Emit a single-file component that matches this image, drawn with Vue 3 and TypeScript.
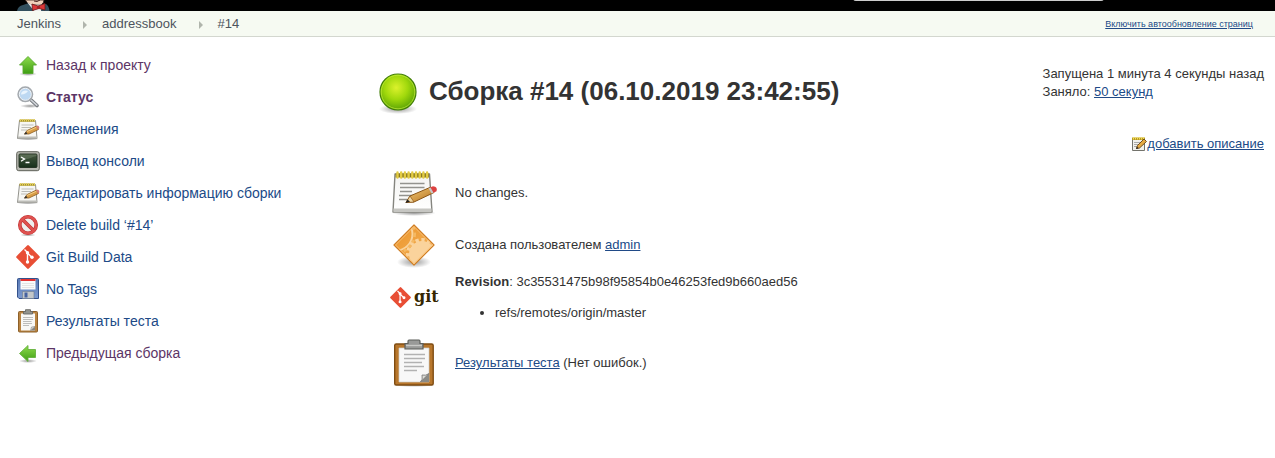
<script setup lang="ts">
interface Task {
  label: string
  icon: string
  visited?: boolean
  current?: boolean
}

const crumbs: string[] = ['Jenkins', 'addressbook', '#14']

const tasks: Task[] = [
  { label: 'Назад к проекту', icon: 'up', visited: true },
  { label: 'Статус', icon: 'search', visited: true, current: true },
  { label: 'Изменения', icon: 'notepad-md' },
  { label: 'Вывод консоли', icon: 'terminal' },
  { label: 'Редактировать информацию сборки', icon: 'notepad-md' },
  { label: 'Delete build ‘#14’', icon: 'forbidden' },
  { label: 'Git Build Data', icon: 'git' },
  { label: 'No Tags', icon: 'save' },
  { label: 'Результаты теста', icon: 'clipboard-md' },
  { label: 'Предыдущая сборка', icon: 'previous', visited: true },
]
</script>

<template>
  <svg class="sprite" width="0" height="0" aria-hidden="true">
    <defs>
      <radialGradient id="g-ball" cx="0.45" cy="0.38" r="0.65">
        <stop offset="0" stop-color="#dcf22c" />
        <stop offset="0.5" stop-color="#a0d80c" />
        <stop offset="1" stop-color="#559f04" />
      </radialGradient>
      <radialGradient id="g-shadow">
        <stop offset="0" stop-color="#000" stop-opacity="0.4" />
        <stop offset="1" stop-color="#000" stop-opacity="0" />
      </radialGradient>
      <linearGradient id="g-green" x1="0" y1="0" x2="0" y2="1">
        <stop offset="0" stop-color="#8edc4c" />
        <stop offset="1" stop-color="#3f9e14" />
      </linearGradient>
      <linearGradient id="g-paper" x1="0" y1="0" x2="0" y2="1">
        <stop offset="0" stop-color="#f4f4f2" />
        <stop offset="1" stop-color="#fff" />
      </linearGradient>
      <linearGradient id="g-pencil" x1="0" y1="0" x2="1" y2="1">
        <stop offset="0" stop-color="#f6cf7c" />
        <stop offset="1" stop-color="#b5701c" />
      </linearGradient>
      <linearGradient id="g-screen" x1="0" y1="0" x2="0" y2="1">
        <stop offset="0" stop-color="#45583f" />
        <stop offset="1" stop-color="#17301b" />
      </linearGradient>
      <linearGradient id="g-floppy" x1="0" y1="0" x2="0" y2="1">
        <stop offset="0" stop-color="#5878b4" />
        <stop offset="1" stop-color="#7d9bd0" />
      </linearGradient>
      <linearGradient id="g-orange" x1="0" y1="0" x2="1" y2="1">
        <stop offset="0" stop-color="#ec9428" />
        <stop offset="1" stop-color="#f3b460" />
      </linearGradient>
      <clipPath id="c-diamond"><path d="M24 5 43 24 24 43 5 24Z" /></clipPath>
    </defs>

    <symbol id="i-up" viewBox="0 0 24 24">
      <ellipse cx="12" cy="21" rx="9" ry="2" fill="url(#g-shadow)" />
      <path d="M12 3.500 20.500 12H17V20.500H7V12H3.500Z" fill="url(#g-green)" stroke="#57a82e" stroke-width="0.900" stroke-linejoin="round" />
    </symbol>
    <symbol id="i-previous" viewBox="0 0 24 24">
      <ellipse cx="12" cy="20" rx="9" ry="2" fill="url(#g-shadow)" />
      <path d="M3.500 12.500 12 4.500V8.500H19.500V16.500H12V20.500Z" fill="url(#g-green)" stroke="#67b13f" stroke-width="0.900" stroke-linejoin="round" />
    </symbol>
    <symbol id="i-search" viewBox="0 0 24 24">
      <ellipse cx="14" cy="21" rx="10" ry="2" fill="url(#g-shadow)" />
      <path d="M14.500 14.500 21 20.500" stroke="#777b80" stroke-width="3.600" stroke-linecap="round" />
      <path d="M15 15 20.800 20.200" stroke="#d0d4d8" stroke-width="1.600" stroke-linecap="round" />
      <circle cx="9.300" cy="9.300" r="7" fill="#bdd8f2" stroke="#a4a9ae" stroke-width="2" />
      <circle cx="9.300" cy="9.300" r="6" fill="none" stroke="#eef3f8" />
      <path d="M5 9.500C5 6 9 4.500 12 6 10.500 8.500 8.500 9.200 5 9.500Z" fill="#eaf4fd" />
    </symbol>
    <symbol id="i-notepad" viewBox="0 0 48 48">
      <ellipse cx="24" cy="44" rx="22" ry="3" fill="url(#g-shadow)" />
      <path d="M5 5H39.500L42 43H3Z" fill="url(#g-paper)" stroke="#85857f" stroke-width="1.400" stroke-linejoin="round" />
      <path d="M3.500 39.500H41.500V43H3.500Z" fill="#c6c6c2" />
      <path d="M5.500 4.500H39V8.500H5.500Z" fill="#8b7a20" />
      <path d="M7.500 3.500V8.500M11.200 3.500V8.500M14.900 3.500V8.500M18.600 3.500V8.500M22.300 3.500V8.500M26 3.500V8.500M29.700 3.500V8.500M33.400 3.500V8.500M37.100 3.500V8.500" stroke="#e3cc43" stroke-width="2.400" stroke-linecap="round" />
      <path d="M10 14.500H34.500M10 18.500H34.500M10 22.500H22M9 26.500H28M9 30.500H18" stroke="#92928e" stroke-width="1.300" />
      <path d="M16 33.500 20 27 41 18 44 23.500 24 33Z" fill="url(#g-pencil)" stroke="#8b5515" stroke-width="1" stroke-linejoin="round" />
      <path d="M16 33.500 20 27 24 33Z" fill="#f0d7a4" stroke="#8b5515" stroke-width="0.700" />
      <path d="M15.500 34 17.500 30.500 20 32.800Z" fill="#222" />
      <path d="M40 18.500 43 17.200Q48 17.500 46.500 22.300L43 24Z" fill="#dc4141" />
      <path d="M38.500 19.200 40.500 18.400 43.500 23.700 41.500 24.600Z" fill="#c8c8c8" />
    </symbol>
    <symbol id="i-notepad-md" viewBox="0 0 24 24">
      <ellipse cx="12" cy="22" rx="11" ry="1.500" fill="url(#g-shadow)" />
      <path d="M3.500 3.500H19.500L21 21.500H1.500Z" fill="#f7f7f4" stroke="#93938d" stroke-linejoin="round" />
      <path d="M2 19.500H21V21.500H2Z" fill="#bdbdb8" />
      <path d="M3.500 2.500H19V4.800H3.500Z" fill="#a8952f" />
      <path d="M4.500 2V4.500M6.500 2V4.500M8.500 2V4.500M10.500 2V4.500M12.500 2V4.500M14.500 2V4.500M16.500 2V4.500M18.500 2V4.500" stroke="#e5d05a" />
      <path d="M5.500 8H17.500M5.500 10.500H15M5 13H11" stroke="#b5b5b1" stroke-width="0.900" />
      <path d="M8.500 17 11 13.500 20.500 9 22.500 12.500 13 17Z" fill="#d99d46" stroke="#8b5c20" stroke-width="0.800" stroke-linejoin="round" />
      <path d="M11 14.500 20.500 10.200" stroke="#f4cf86" />
      <path d="M8 17.500 10 14.800 11.500 16.800Z" fill="#333" />
      <path d="M20 9.200 21.500 8.500Q24 9 23 12L22 12.600Z" fill="#d5807a" />
    </symbol>
    <symbol id="i-notepad-sm" viewBox="0 0 16 16">
      <path d="M1.500 2.500H13.500V14.500H1.500Z" fill="#f1f1ed" stroke="#73736c" />
      <path d="M1 1.500H14V4H1Z" fill="#b79a20" />
      <path d="M2.500 1V3.500M4.500 1V3.500M6.500 1V3.500M8.500 1V3.500M10.500 1V3.500M12.500 1V3.500" stroke="#f2dc61" />
      <path d="M3 6.500H10M3 8.500H8M3 10.500H6" stroke="#aaa" />
      <path d="M5.500 12.500 6.500 9.500 13 3 15.500 5.500 8.500 12Z" fill="#e6ab44" stroke="#654114" stroke-width="0.900" stroke-linejoin="round" />
      <path d="M5 13 6 10.800 7.500 12.300Z" fill="#222" />
    </symbol>
    <symbol id="i-terminal" viewBox="0 0 24 24">
      <rect x="0.700" y="2.700" width="22.600" height="19" rx="2" fill="#b9bab2" stroke="#5e6058" />
      <rect x="3" y="5" width="18" height="13.500" rx="1" fill="url(#g-screen)" stroke="#273526" />
      <path d="M3.500 9C10 13 15 8 20.500 7V5.500H3.500Z" fill="#8a9a82" opacity="0.350" />
      <path d="M5 8 8.500 10 5 12.200M9.500 13.500H13.500" fill="none" stroke="#fff" stroke-width="1.300" />
    </symbol>
    <symbol id="i-forbidden" viewBox="0 0 24 24">
      <ellipse cx="12" cy="22" rx="8" ry="1.500" fill="url(#g-shadow)" />
      <circle cx="12" cy="12" r="8.200" fill="#eee" stroke="#c03030" stroke-width="3.600" />
      <path d="M6.500 6.500 17.500 17.500" stroke="#c03030" stroke-width="3.600" />
      <circle cx="12" cy="12" r="8.200" fill="none" stroke="#df5250" stroke-width="2.400" />
      <path d="M6.500 6.500 17.500 17.500" stroke="#df5250" stroke-width="2.400" />
    </symbol>
    <symbol id="i-git" viewBox="0 0 24 24">
      <rect x="3.300" y="3.300" width="17.400" height="17.400" rx="1.200" fill="#e84e35" transform="rotate(45 12 12)" />
      <path d="M8.500 4.500 11.500 7.500V17M11.500 8 16 12.500" fill="none" stroke="#fff" stroke-width="1.400" />
      <circle cx="11.500" cy="7.800" r="1.700" fill="#fff" />
      <circle cx="11.500" cy="17" r="1.700" fill="#fff" />
      <circle cx="16" cy="12.300" r="1.700" fill="#fff" />
    </symbol>
    <symbol id="i-save" viewBox="0 0 24 24">
      <path d="M2.500 1.500H21.500Q22.500 1.500 22.500 2.500V21.500H3L1.500 20V2.500Q1.500 1.500 2.500 1.500Z" fill="url(#g-floppy)" stroke="#34528c" />
      <path d="M4.500 2H19.500V12.500H4.500Z" fill="#fafafa" />
      <path d="M4.500 2H19.500V4H4.500Z" fill="#e33131" />
      <path d="M6 6.500H18M6 8.500H18M6 10.500H18" stroke="#dedede" stroke-width="0.800" />
      <path d="M6.500 14.500H18V21.500H6.500Z" fill="#c3c7c9" stroke="#6c7c92" stroke-width="0.600" />
      <path d="M8.500 15.500H11.500V20.500H8.500Z" fill="#4562a0" />
    </symbol>
    <symbol id="i-clipboard" viewBox="0 0 48 48">
      <ellipse cx="24" cy="46" rx="22" ry="2" fill="url(#g-shadow)" />
      <rect x="4.700" y="5" width="38.500" height="41" rx="1.500" fill="#b8772c" stroke="#7f4c12" stroke-width="1.400" />
      <path d="M9 9H39V43H9Z" fill="#f8f8f8" stroke="#cfcfca" stroke-width="0.700" />
      <path d="M14 15.500H35M14 19.500H35M14 23.500H32M14 27.500H34M14 31.500H27" stroke="#b2b2b2" stroke-width="1.500" />
      <path d="M39 34.500V43H30.500Q33 41 32 36Q36 37 39 34.500Z" fill="#8b8b87" />
      <path d="M30.500 43Q33 41 32 36Q36 37 39 34.500Z" fill="#deded9" stroke="#777" stroke-width="0.800" />
      <path d="M15 4.500H18V2.500Q18 1 19 1H29Q30 1 30 2.500V4.500H33V10H15Z" fill="#999a98" stroke="#5d5f5b" stroke-width="1.200" />
      <path d="M16 6.500H32" stroke="#c8c9c6" stroke-width="1.300" />
    </symbol>
    <symbol id="i-clipboard-md" viewBox="0 0 24 24">
      <rect x="2.500" y="2.500" width="19" height="20.500" rx="1" fill="#b98442" stroke="#8d6029" />
      <path d="M5 4.500H19V21.500H5Z" fill="#f8f8f6" />
      <path d="M7 8.500H17M7 10.500H17M7 12.500H15.500M7 14.500H16M7 16.500H13" stroke="#bdbdbb" />
      <path d="M19 17.500V21.500H14.500Z" fill="#858581" />
      <path d="M14.500 21.500 15.500 18 19 17.500Z" fill="#dcdcd8" stroke="#888" stroke-width="0.600" />
      <path d="M7.500 2.500H9.500V0.700H14.500V2.500H16.500V5H7.500Z" fill="#92948f" stroke="#666864" stroke-width="0.900" />
    </symbol>
    <symbol id="i-ball" viewBox="0 0 48 48">
      <ellipse cx="24" cy="41" rx="19" ry="5" fill="url(#g-shadow)" />
      <circle cx="24" cy="24" r="18" fill="url(#g-ball)" stroke="#437f08" stroke-width="1.200" />
      <circle cx="24" cy="24" r="16.800" fill="none" stroke="#c8ee3f" stroke-width="0.900" opacity="0.750" />
    </symbol>
    <symbol id="i-user-cause" viewBox="0 0 48 48">
      <ellipse cx="24" cy="41" rx="17" ry="6" fill="url(#g-shadow)" />
      <path d="M24 4 44 24 24 44 4 24Z" fill="url(#g-orange)" stroke="#cf7d24" stroke-width="1.200" stroke-linejoin="round" />
      <g clip-path="url(#c-diamond)">
        <circle cx="32" cy="33" r="13" fill="#fad39c" />
        <circle cx="32" cy="33" r="14" fill="none" stroke="#fad39c" stroke-width="4" stroke-dasharray="3.300 2.600" />
        <circle cx="6" cy="13" r="16.500" fill="none" stroke="#fad39c" stroke-width="2" />
        <circle cx="6" cy="13" r="18.500" fill="none" stroke="#f4b863" stroke-width="3" stroke-dasharray="3 3" />
      </g>
      <path d="M24 5.500 42.500 24 24 42.500 5.500 24Z" fill="none" stroke="#f8c27c" stroke-width="0.900" />
    </symbol>
  </svg>

  <header class="top-bar">
    <svg class="mascot" viewBox="0 0 33 11" aria-hidden="true">
      <path d="M0 11Q1 6 6 5L12 3 29 4Q32 6 32.500 11Z" fill="#33505e" />
      <path d="M8 0H27Q27 3 24 5H14Q10 3 8 0Z" fill="#f0d2bb" stroke="#301f1b" stroke-width="0.800" />
      <path d="M10 2 15 5 25 4.500 24 11H17Z" fill="#eee" />
      <path d="M17 1Q20 2.500 23 0" fill="none" stroke="#4b2521" />
      <path d="M15 4 21 6 28 3.500V10L22 8.500 15.500 10.500Z" fill="#dc3838" stroke="#691919" stroke-width="0.800" />
      <circle cx="21.500" cy="7.300" r="1.600" fill="#a31f22" />
    </svg>
    <input class="search" type="search" aria-label="Поиск">
  </header>

  <nav class="breadcrumbs" aria-label="Навигация">
    <ul class="crumbs">
      <li v-for="crumb in crumbs" :key="crumb"><a href="#">{{ crumb }}</a></li>
    </ul>
    <a class="refresh" href="#">Включить автообновление страниц</a>
  </nav>

  <div class="page">
    <aside class="side">
      <a
        v-for="task in tasks"
        :key="task.label"
        href="#"
        class="task"
        :class="{ visited: task.visited, current: task.current }"
      >
        <svg class="icon-md" aria-hidden="true"><use :href="`#i-${task.icon}`" /></svg>
        <span>{{ task.label }}</span>
      </a>
    </aside>

    <main class="main">
      <div class="heading">
        <h1>
          <svg class="icon-xl" aria-hidden="true"><use href="#i-ball" /></svg>
          <span>Сборка #14 (06.10.2019 23:42:55)</span>
        </h1>
        <div class="info">
          <div class="timing">
            <div>Запущена 1 минута 4 секунды назад</div>
            <div>Заняло: <a href="#">50 секунд</a></div>
          </div>
          <a class="describe" href="#"><svg class="icon-sm" aria-hidden="true"><use href="#i-notepad-sm" /></svg><span>добавить описание</span></a>
        </div>
      </div>

      <div class="summary">
        <section class="row">
          <svg class="icon-xl" aria-hidden="true"><use href="#i-notepad" /></svg>
          <div>No changes.</div>
        </section>
        <section class="row">
          <svg class="icon-xl" aria-hidden="true"><use href="#i-user-cause" /></svg>
          <div>Создана пользователем <a href="#">admin</a></div>
        </section>
        <section class="row revision">
          <div class="git-logo">
            <svg aria-hidden="true"><use href="#i-git" /></svg>
            <span>git</span>
          </div>
          <div>
            <b>Revision</b>: 3c35531475b98f95854b0e46253fed9b660aed56
            <ul class="refs"><li>refs/remotes/origin/master</li></ul>
          </div>
        </section>
        <section class="row">
          <svg class="icon-xl" aria-hidden="true"><use href="#i-clipboard" /></svg>
          <div><a href="#">Результаты теста</a> (Нет ошибок.)</div>
        </section>
      </div>
    </main>
  </div>
</template>

<style>
body {
  background: #fff;
  color: #333;
  font-family: "Liberation Sans", Arial, sans-serif;
  font-size: 13px;
  line-height: 18px;
}
</style>

<style scoped>
a {
  color: #204a87;
}

.sprite {
  position: absolute;
}

.top-bar {
  display: flex;
  justify-content: space-between;
  align-items: flex-end;
  height: 11px;
  padding: 0 170px 0 17px;
  overflow: hidden;
  background: #000;
}

.mascot {
  width: 33px;
  height: 11px;
}

.search {
  box-sizing: border-box;
  width: 253px;
  height: 24px;
  margin-bottom: 10px;
  border: 1px solid #ccc;
  border-radius: 4px;
  background: #fff;
}

.breadcrumbs {
  display: flex;
  justify-content: space-between;
  align-items: center;
  height: 25px;
  padding: 0 22px 0 17px;
  border-bottom: 1px solid #d3d7cf;
  background: #f6faf2;
}

.crumbs {
  display: flex;
  margin: 0;
  padding: 0;
  list-style: none;
}

.crumbs li {
  display: flex;
  align-items: center;
}

.crumbs li + li::before {
  content: "";
  margin: 2px 15px 0 22px;
  border: solid transparent;
  border-width: 4px 0 4px 4px;
  border-left-color: #b0b5ac;
}

.crumbs a {
  color: #4d545d;
  text-decoration: none;
}

.refresh {
  font-size: 9px;
}

.page {
  display: flex;
  align-items: flex-start;
}

.side {
  flex: none;
  width: 344px;
  padding: 12px 0 0 16px;
}

.task {
  display: flex;
  align-items: center;
  gap: 6px;
  height: 32px;
  color: #204a87;
  font-size: 14px;
  text-decoration: none;
}

.task.visited {
  color: #5c3566;
}

.task.current {
  font-weight: bold;
}

.icon-sm {
  width: 16px;
  height: 16px;
}

.icon-md {
  width: 24px;
  height: 24px;
}

.icon-xl {
  flex: none;
  width: 48px;
  height: 48px;
}

.main {
  flex: 1;
  padding: 28px 11px 0 14px;
}

.heading {
  display: flex;
  justify-content: space-between;
  align-items: flex-start;
  min-height: 102px;
}

h1 {
  display: flex;
  align-items: center;
  gap: 7px;
  margin: 3px 0 0;
  font-size: 26px;
  line-height: 30px;
}

h1 span {
  padding-bottom: 2px;
}

.info {
  display: flex;
  flex-direction: column;
  align-items: flex-end;
  gap: 34px;
}

.describe {
  display: flex;
  align-items: center;
  text-decoration: none;
}

.describe span {
  text-decoration: underline;
}

.summary {
  padding-left: 16px;
}

.row {
  display: flex;
  align-items: center;
  gap: 17px;
  padding: 2px 0;
}

.row.revision {
  align-items: flex-start;
  padding-bottom: 15px;
}

.git-logo {
  display: flex;
  align-items: center;
  gap: 3px;
  flex: none;
  width: 48px;
  height: 48px;
  color: #362701;
  font-family: "DejaVu Serif", serif;
  font-size: 16px;
  font-weight: bold;
  line-height: 20px;
}

.git-logo svg {
  flex: none;
  width: 21px;
  height: 21px;
}

.refs {
  margin: 13px 0 0;
  padding-left: 40px;
}
</style>
